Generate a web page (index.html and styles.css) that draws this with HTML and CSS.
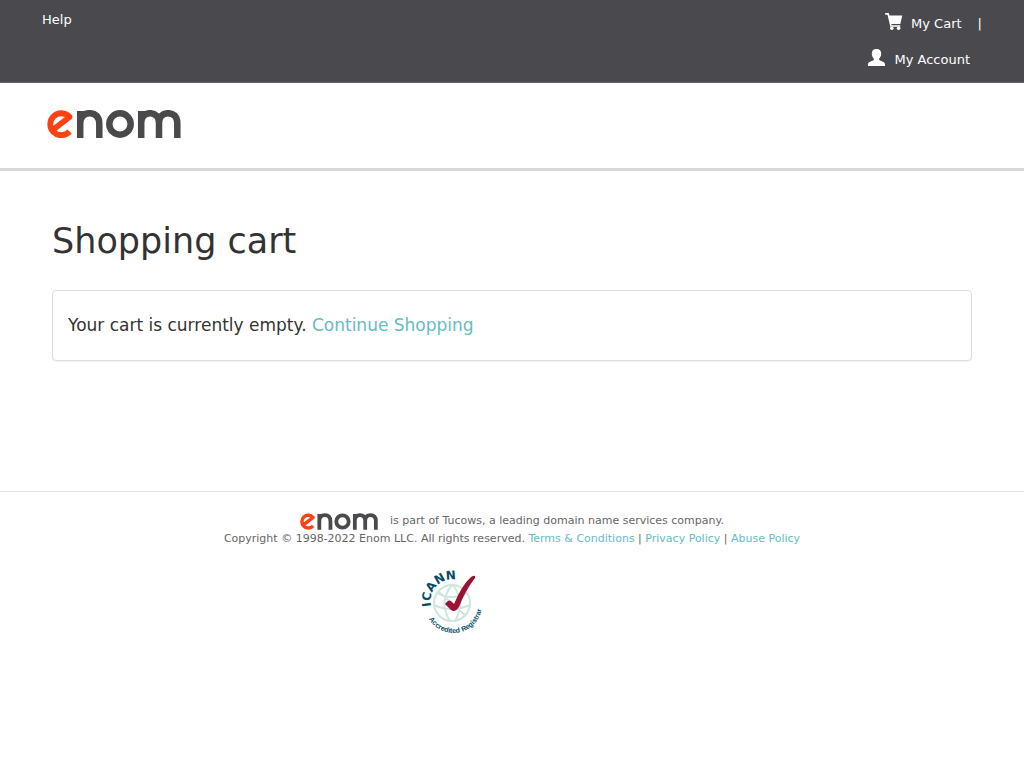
FILE: index.html
```html
<!DOCTYPE html>
<html lang="en">
<head>
<meta charset="utf-8">
<meta name="viewport" content="width=device-width, initial-scale=1">
<title>Shopping cart</title>
<link rel="stylesheet" href="styles.css">
</head>
<body>
<svg class="defs" aria-hidden="true">
  <symbol id="logo" viewBox="0 0 134 28">
    <g fill="none" stroke-width="6.500">
      <path d="M22.500 21.500A11 11 0 1 1 22.500 7L7 19" stroke="#fc4112" stroke-width="5.800" stroke-linejoin="round"/>
      <g stroke="#4a4a4d">
        <path d="M33.200 1V28M33.200 14C33.200 6 37 3.200 42.500 3.200S52.300 6 52.300 14V28"/>
        <circle cx="73" cy="14" r="10.700"/>
        <path d="M94.200 1V28M94.200 13C94.200 6 98 3.200 103 3.200S112 6 112 13V28M112 13C112 6 116 3.200 121 3.200S130.300 6 130.300 13V28"/>
      </g>
    </g>
  </symbol>
</svg>
<nav class="topbar">
  <a href="#">Help</a>
  <ul class="account">
    <li class="cart-item">
      <a href="#"><svg class="icon" viewBox="0 1 18 18" aria-hidden="true"><path fill="#fff" d="M0 .5Q0 0 1 0H3.800L4.500 2.500H17.300L15.300 11H6.300L6.700 12.200H15.300V13.800H5.300L2.500 1.700H.5Q0 1.700 0 .5Z"/><circle cx="6.800" cy="15.300" r="1.800" fill="#fff"/><circle cx="13.600" cy="15.300" r="1.800" fill="#fff"/></svg>My Cart</a>
      <span>|</span>
    </li>
    <li class="user-item">
      <a href="#"><svg class="icon" viewBox="0 1 18 18" aria-hidden="true"><path fill="#fff" d="M8.500 0C11.800 0 13.200 1.800 13.200 4.500C13.200 7 12.300 8.500 11.200 9.500V11C12 12 17 12.500 17 15V17H0V15C0 12.500 5 12 5.800 11V9.500C4.700 8.500 3.800 7 3.800 4.500C3.800 1.800 5.200 0 8.500 0Z"/></svg>My Account</a>
    </li>
  </ul>
</nav>
<header class="brand">
  <a href="#" aria-label="enom"><svg class="brand-logo" aria-hidden="true"><use href="#logo"/></svg></a>
</header>
<main class="content">
  <h1>Shopping cart</h1>
  <section class="panel">
    <p>Your cart is currently empty. <a href="#">Continue Shopping</a></p>
  </section>
</main>
<footer class="footer">
  <p class="company"><svg class="footer-logo" role="img" aria-label="enom"><use href="#logo"/></svg>is part of Tucows, a leading domain name services company.</p>
  <p>Copyright © 1998-2022 Enom LLC. All rights reserved. <a href="#">Terms &amp; Conditions</a> | <a href="#">Privacy Policy</a> | <a href="#">Abuse Policy</a></p>
  <a class="seal" href="#" aria-label="ICANN Accredited Registrar">
    <svg viewBox="0 0 64 64" width="64" height="64">
      <defs>
        <path id="arc-top" d="M11 35A22 22 0 1 1 54 35"/>
        <path id="arc-bottom" d="M9 48A28 28 0 0 0 58 19"/>
      </defs>
      <g fill="none" stroke="#cfe6df" stroke-width="2">
        <circle cx="32" cy="32" r="18"/>
        <path d="M17 22Q31 30 47 22M14 34Q31 42 50 34M32 14Q18 31 30 50M33 14Q46 32 35 50M18 20L46 45"/>
      </g>
      <text class="seal-name"><textPath href="#arc-top">ICANN</textPath></text>
      <text class="seal-note"><textPath href="#arc-bottom">Accredited Registrar</textPath></text>
      <path fill="#9b1236" d="M25 33Q28 28 31 30L34 33Q42 14 51 6Q56 3 55 7Q45 20 39 36Q35 42 31 39Z"/>
    </svg>
  </a>
</footer>
</body>
</html>
```

FILE: styles.css
```css
* { box-sizing: border-box; }

body {
  margin: 0;
  background: #fff;
  color: #333;
  font-family: "DejaVu Sans", Verdana, sans-serif;
  font-size: 13px;
  line-height: 20px;
}

a { color: #65bcc4; text-decoration: none; }
p { margin: 0; }
.defs { display: none; }

.topbar {
  display: flex;
  justify-content: space-between;
  padding: 10px 42px 12px;
  background: #4a4a4e;
  border-bottom: 1px solid #66666a;
  color: #fff;
}
.topbar a { color: #fff; }

.account {
  display: flex;
  flex-direction: column;
  align-items: flex-end;
  gap: 16px;
  margin: 0;
  padding: 4px 0 0;
  list-style: none;
}
.account li { display: flex; gap: 16px; }
.account a { display: flex; gap: 8px; }
.user-item { padding-right: 12px; }
.icon { width: 18px; height: 18px; overflow: visible; }

.brand {
  display: flex;
  padding: 27px 47px 30px;
  border-bottom: 3px solid #d8d8d8;
}
.brand a { display: flex; }
.brand-logo { width: 134px; height: 28px; }

.content { padding: 50px 52px 130px; }

h1 {
  margin: 0 0 29px;
  font-size: 35px;
  font-weight: 400;
  line-height: 40px;
}

.panel {
  padding: 22px 15px;
  border: 1px solid #ddd;
  border-radius: 4px;
  box-shadow: 0 1px 1px rgba(0, 0, 0, .05);
  font-size: 17px;
  line-height: 25px;
}

.footer {
  padding: 20px 16px;
  border-top: 1px solid #e5e5e5;
  color: #666;
  font-size: 11px;
  line-height: 18px;
  text-align: center;
}
.company {
  display: flex;
  align-items: center;
  justify-content: center;
  gap: 12px;
}
.footer-logo { width: 78px; height: 17px; }

.seal {
  display: block;
  width: 64px;
  height: 64px;
  margin: 23px auto 0;
  transform: translateX(-60px);
}
.seal svg { display: block; overflow: visible; }
.seal-name { fill: #064b66; font-size: 12px; font-weight: 700; }
.seal-note { fill: #064b66; font-family: "Liberation Sans", Arial, sans-serif; font-size: 7px; font-weight: 700; }
```
